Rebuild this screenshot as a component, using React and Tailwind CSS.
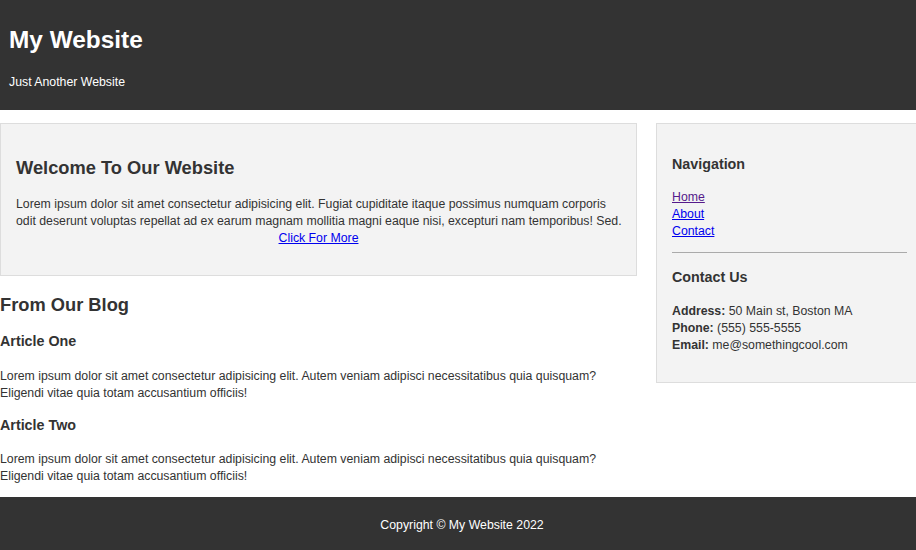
const LOREM_WELCOME =
  'Lorem ipsum dolor sit amet consectetur adipisicing elit. Fugiat cupiditate itaque possimus numquam corporis odit deserunt voluptas repellat ad ex earum magnam mollitia magni eaque nisi, excepturi nam temporibus! Sed.'

const LOREM_ARTICLE =
  'Lorem ipsum dolor sit amet consectetur adipisicing elit. Autem veniam adipisci necessitatibus quia quisquam? Eligendi vitae quia totam accusantium officiis!'

const ARTICLES = ['Article One', 'Article Two']

export default function App() {
  return (
    <div className="h-[550px] w-[916px] overflow-hidden bg-white">
      <div className="w-[924px] text-[12.3px] leading-[17px] text-[#333] font-['Liberation_Sans',Arial,sans-serif]">
        {/* Header */}
        <header className="h-[110px] bg-[#333] pl-[9px] pt-[26px] text-white">
          <h1 className="text-[24.4px] font-bold leading-[28px]">My Website</h1>
          <p className="mt-[20px]">Just Another Website</p>
        </header>

        <div className="mt-[13px] flex items-start justify-between">
          {/* Main column */}
          <main className="w-[637px]">
            <section className="border border-[#ddd] bg-[#f3f3f3] pl-[15px] pr-[11px] pt-[33px] pb-[28px]">
              <h2 className="text-[18.3px] font-bold leading-[21px]">Welcome To Our Website</h2>
              <p className="mt-[18px]">{LOREM_WELCOME}</p>
              <div className="pr-[4px] text-center">
                <a href="#" className="text-[#0000ee] underline">Click For More</a>
              </div>
            </section>

            <section className="pt-[18px]">
              <h2 className="text-[18.3px] font-bold leading-[21px]">From Our Blog</h2>
              {ARTICLES.map((title, i) => (
                <article key={title} className={i === 0 ? 'mt-[18px]' : 'mt-[15px]'}>
                  <h3 className="text-[14.3px] font-bold leading-[16.5px]">{title}</h3>
                  <p className="mt-[18px]">{LOREM_ARTICLE}</p>
                </article>
              ))}
            </section>
          </main>

          {/* Sidebar */}
          <aside className="w-[268px] border border-[#ddd] bg-[#f3f3f3] pl-[15px] pr-[16px] pt-[32px] pb-[28px]">
            <h3 className="text-[14.3px] font-bold leading-[16.5px]">Navigation</h3>
            <ul className="mt-[16px]">
              <li><a href="#" className="text-[#551a8b] underline">Home</a></li>
              <li><a href="#" className="text-[#0000ee] underline">About</a></li>
              <li><a href="#" className="text-[#0000ee] underline">Contact</a></li>
            </ul>
            <hr className="mt-[12px] border-t border-[#aaa]" />
            <h3 className="mt-[16px] text-[14.3px] font-bold leading-[16.5px]">Contact Us</h3>
            <ul className="mt-[18px]">
              <li><strong>Address:</strong> 50 Main st, Boston MA</li>
              <li><strong>Phone:</strong> (555) 555-5555</li>
              <li><strong>Email:</strong> me@somethingcool.com</li>
            </ul>
          </aside>
        </div>

        {/* Footer */}
        <footer className="mt-[12px] bg-[#333] pt-[20px] pb-[16px] text-center text-white">
          <p>Copyright &copy; My Website 2022</p>
        </footer>
      </div>
    </div>
  )
}
